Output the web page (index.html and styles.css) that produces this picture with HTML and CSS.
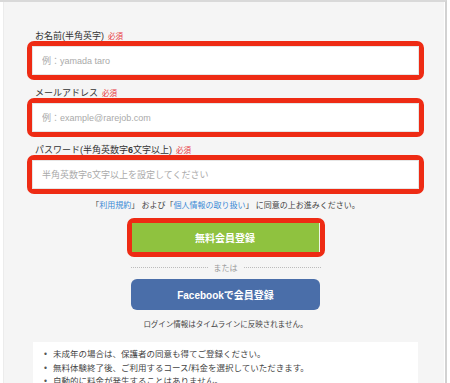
FILE: index.html
```html
<!DOCTYPE html>
<html lang="ja">
<head>
    <meta charset="UTF-8">
    <meta name="viewport" content="width=device-width, initial-scale=1.0">
    <title>無料会員登録</title>
    <link rel="stylesheet" href="styles.css">
</head>
<body>
    <div class="frame">
        <div class="panel">
            <form class="signup">
                <div class="field">
                    <label class="label"><span>お名前(半角英字)</span><span class="req">必須</span></label>
                    <div class="mark"><input type="text" class="input" placeholder="例：yamada taro"></div>
                </div>
                <div class="field">
                    <label class="label"><span>メールアドレス</span><span class="req">必須</span></label>
                    <div class="mark"><input type="email" class="input" placeholder="例：example@rarejob.com"></div>
                </div>
                <div class="field">
                    <label class="label"><span>パスワード(半角英数字<b>6</b>文字以上)</span><span class="req">必須</span></label>
                    <div class="mark"><input type="password" class="input" placeholder="半角英数字6文字以上を設定してください"></div>
                </div>
                <p class="terms">「<a href="#">利用規約</a>」 および「<a href="#">個人情報の取り扱い</a>」 に同意の上お進みください。</p>
                <div class="mark mark-btn"><button type="button" class="btn btn-green">無料会員登録</button></div>
                <div class="or"><span>または</span></div>
                <button type="button" class="btn btn-fb">Facebookで会員登録</button>
                <p class="fb-note">ログイン情報はタイムラインに反映されません。</p>
            </form>
            <ul class="notes">
                <li>未成年の場合は、保護者の同意も得てご登録ください。</li>
                <li>無料体験終了後、ご利用するコース/料金を選択していただきます。</li>
                <li>自動的に料金が発生することはありません。</li>
            </ul>
        </div>
    </div>
</body>
</html>
```

FILE: styles.css
```css
body {
    margin: 0;
    background-color: #fff;
    font-family: "Liberation Sans", "Noto Sans CJK JP", sans-serif;
    color: #333;
    overflow: hidden;
}
.frame {
    width: 447px;
    height: 383px;
    border-top: 2px solid #d9d9d9;
    border-right: 2px solid #d2d2d2;
    box-sizing: border-box;
}
.panel {
    width: 441px;
    height: 100%;
    margin-left: 3px;
    background-color: #f5f5f5;
    border-left: 1px solid #ececec;
    box-sizing: border-box;
    padding-top: 27px;
    overflow: hidden;
}
.signup {
    width: 397px;
    margin-left: 23px;
}
.field {
    margin-bottom: 6px;
}
.label {
    display: flex;
    align-items: center;
    gap: 4px;
    height: 12px;
    padding-left: 8px;
    font-size: 9px;
    color: #333;
}
.req {
    color: #e8383d;
    font-size: 7.5px;
}
.mark {
    border: 5px solid #ee2b14;
    border-radius: 7px;
    background-color: #fff;
}
.input {
    display: block;
    width: 100%;
    height: 29px;
    box-sizing: border-box;
    border: 1px solid #e6e6e6;
    padding: 0 9px;
    font-family: inherit;
    font-size: 9px;
    outline: none;
}
.input::placeholder {
    color: #aaa;
}
.terms {
    margin: 1px 0 0;
    height: 12px;
    text-align: center;
    font-size: 8px;
    line-height: 12px;
    color: #444;
}
.terms a {
    color: #3a8ad6;
    text-decoration: none;
}
.mark-btn {
    width: 188px;
    margin: 6px auto 0;
    background-color: #8fc23f;
}
.btn {
    display: block;
    border: none;
    font-family: inherit;
    font-weight: bold;
    color: #fff;
    font-size: 10px;
    cursor: pointer;
}
.btn-green {
    width: 100%;
    height: 29px;
    background-color: #8fc23f;
    border-right: 1px solid #eef5e4;
}
.or {
    display: flex;
    align-items: center;
    gap: 6px;
    width: 190px;
    height: 12px;
    margin: 4px auto 0;
    font-size: 8px;
    color: #999;
}
.or::before, .or::after {
    content: "";
    flex: 1;
    border-top: 1px dotted #bbb;
}
.btn-fb {
    width: 189px;
    height: 31px;
    margin: 6px auto 0;
    background-color: #4a6ea9;
    border-radius: 6px;
}
.fb-note {
    margin: 10px 0 0;
    height: 10px;
    text-align: center;
    font-size: 7.5px;
    line-height: 10px;
    color: #444;
}
.notes {
    width: 385px;
    margin: 12px 0 0 29px;
    padding: 6px 0 0 11px;
    box-sizing: border-box;
    background-color: #fff;
    list-style: none;
    font-size: 8.5px;
    line-height: 13.5px;
    color: #444;
}
.notes li::before {
    content: "•";
    display: inline-block;
    width: 9px;
    color: #555;
}
```
